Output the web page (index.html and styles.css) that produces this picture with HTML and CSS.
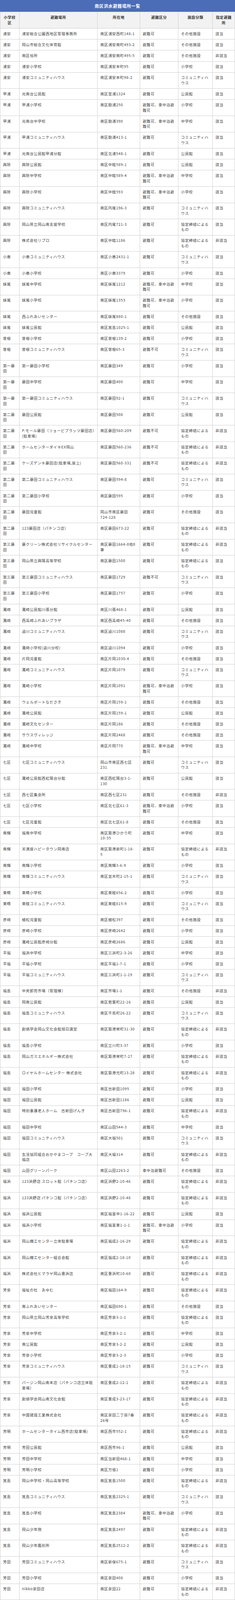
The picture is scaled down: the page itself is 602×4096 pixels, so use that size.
FILE: index.html
```html
<!DOCTYPE html>
<html lang="ja">
<head>
<meta charset="utf-8">
<title>南区洪水避難場所一覧</title>
<link rel="stylesheet" href="styles.css">
</head>
<body>
<div class="page">
<div class="title">南区洪水避難場所一覧</div>
<table class="shelters">
<colgroup>
<col class="c1"><col class="c2"><col class="c3"><col class="c4"><col class="c5"><col class="c6">
</colgroup>
<thead>
<tr><th>小学校区</th><th>避難場所</th><th>所在地</th><th>避難区分</th><th>施設分類</th><th>指定避難所</th></tr>
</thead>
<tbody>
<tr><td>浦安</td><td>浦安総合公園西地区管理事務所</td><td>南区浦安西町148-1</td><td>避難可</td><td>その他施設</td><td>該当</td></tr>
<tr><td>浦安</td><td>岡山市総合文化体育館</td><td>南区浦安南町493-2</td><td>避難可</td><td>その他施設</td><td>該当</td></tr>
<tr><td>浦安</td><td>南区役所</td><td>南区浦安南町495-5</td><td>避難可</td><td>その他施設</td><td>非該当</td></tr>
<tr><td>浦安</td><td>浦安小学校</td><td>南区浦安本町95</td><td>避難可</td><td>小学校</td><td>該当</td></tr>
<tr><td>浦安</td><td>浦安コミュニティハウス</td><td>南区浦安本町98-2</td><td>避難可</td><td>コミュニティハウス</td><td>該当</td></tr>
<tr><td>甲浦</td><td>光南台公民館</td><td>南区宮浦1324</td><td>避難可</td><td>公民館</td><td>該当</td></tr>
<tr><td>甲浦</td><td>甲浦小学校</td><td>南区飽浦250</td><td>避難可、車中泊避難可</td><td>小学校</td><td>該当</td></tr>
<tr><td>甲浦</td><td>光南台中学校</td><td>南区飽浦390</td><td>避難可、車中泊避難可</td><td>中学校</td><td>該当</td></tr>
<tr><td>甲浦</td><td>甲浦コミュニティハウス</td><td>南区飽浦413-1</td><td>避難可</td><td>コミュニティハウス</td><td>該当</td></tr>
<tr><td>甲浦</td><td>光南台公民館甲浦分館</td><td>南区北浦548-1</td><td>避難可</td><td>公民館</td><td>該当</td></tr>
<tr><td>興除</td><td>興除公民館</td><td>南区中畦589-1</td><td>避難可</td><td>公民館</td><td>該当</td></tr>
<tr><td>興除</td><td>興除中学校</td><td>南区中畦589-4</td><td>避難可、車中泊避難可</td><td>中学校</td><td>該当</td></tr>
<tr><td>興除</td><td>興除小学校</td><td>南区中畦593</td><td>避難可、車中泊避難可</td><td>小学校</td><td>該当</td></tr>
<tr><td>興除</td><td>興除コミュニティハウス</td><td>南区内尾196-3</td><td>避難可</td><td>コミュニティハウス</td><td>該当</td></tr>
<tr><td>興除</td><td>岡山県立岡山南支援学校</td><td>南区内尾721-3</td><td>避難可</td><td>協定締結によるもの</td><td>該当</td></tr>
<tr><td>興除</td><td>株式会社リプロ</td><td>南区中畦1186</td><td>避難可</td><td>協定締結によるもの</td><td>非該当</td></tr>
<tr><td>小串</td><td>小串コミュニティハウス</td><td>南区小串2431-1</td><td>避難可</td><td>コミュニティハウス</td><td>該当</td></tr>
<tr><td>小串</td><td>小串小学校</td><td>南区小串3379</td><td>避難可</td><td>小学校</td><td>該当</td></tr>
<tr><td>妹尾</td><td>妹尾中学校</td><td>南区妹尾1212</td><td>避難可、車中泊避難可</td><td>中学校</td><td>該当</td></tr>
<tr><td>妹尾</td><td>妹尾小学校</td><td>南区妹尾1353</td><td>避難可、車中泊避難可</td><td>小学校</td><td>該当</td></tr>
<tr><td>妹尾</td><td>西ふれあいセンター</td><td>南区妹尾880-1</td><td>避難可</td><td>その他施設</td><td>該当</td></tr>
<tr><td>妹尾</td><td>妹尾公民館</td><td>南区箕島1025-1</td><td>避難可</td><td>公民館</td><td>該当</td></tr>
<tr><td>曽根</td><td>曽根小学校</td><td>南区曽根139-2</td><td>避難可</td><td>小学校</td><td>該当</td></tr>
<tr><td>曽根</td><td>曽根コミュニティハウス</td><td>南区曽根65-3</td><td>避難不可</td><td>コミュニティハウス</td><td>該当</td></tr>
<tr><td>第一藤田</td><td>第一藤田小学校</td><td>南区藤田349</td><td>避難可</td><td>小学校</td><td>該当</td></tr>
<tr><td>第一藤田</td><td>藤田中学校</td><td>南区藤田400</td><td>避難可</td><td>中学校</td><td>該当</td></tr>
<tr><td>第一藤田</td><td>第一藤田コミュニティハウス</td><td>南区藤田92-1</td><td>避難可</td><td>コミュニティハウス</td><td>該当</td></tr>
<tr><td>第二藤田</td><td>藤田公民館</td><td>南区藤田508</td><td>避難可</td><td>公民館</td><td>該当</td></tr>
<tr><td>第二藤田</td><td>P.モール藤田（リョービプラッツ藤田店）(駐車場)</td><td>南区藤田560-209</td><td>避難不可</td><td>協定締結によるもの</td><td>非該当</td></tr>
<tr><td>第二藤田</td><td>ホームセンターダイキEX岡山</td><td>南区藤田560-236</td><td>避難不可</td><td>協定締結によるもの</td><td>非該当</td></tr>
<tr><td>第二藤田</td><td>ケーズデンキ藤田店(駐車場,屋上)</td><td>南区藤田560-331</td><td>避難不可</td><td>協定締結によるもの</td><td>非該当</td></tr>
<tr><td>第二藤田</td><td>第二藤田コミュニティハウス</td><td>南区藤田594-8</td><td>避難可</td><td>コミュニティハウス</td><td>該当</td></tr>
<tr><td>第二藤田</td><td>第二藤田小学校</td><td>南区藤田595</td><td>避難可</td><td>小学校</td><td>該当</td></tr>
<tr><td>第二藤田</td><td>藤田児童館</td><td>岡山市南区藤田<br>724-128</td><td>避難可</td><td>その他施設</td><td>該当</td></tr>
<tr><td>第二藤田</td><td>123藤田店（パチンコ店）</td><td>南区藤田673-22</td><td>避難可</td><td>協定締結によるもの</td><td>非該当</td></tr>
<tr><td>第三藤田</td><td>藤クリーン株式会社リサイクルセンター</td><td>南区藤田1664-8他8<br>筆</td><td>避難可</td><td>協定締結によるもの</td><td>非該当</td></tr>
<tr><td>第三藤田</td><td>岡山県立興陽高等学校</td><td>南区藤田1500</td><td>避難可</td><td>協定締結によるもの</td><td>該当</td></tr>
<tr><td>第三藤田</td><td>第三藤田コミュニティハウス</td><td>南区藤田1729</td><td>避難不可</td><td>コミュニティハウス</td><td>該当</td></tr>
<tr><td>第三藤田</td><td>第三藤田小学校</td><td>南区藤田1757</td><td>避難可</td><td>小学校</td><td>該当</td></tr>
<tr><td>灘崎</td><td>灘崎公民館川張分館</td><td>南区川張468-1</td><td>避難可</td><td>公民館</td><td>該当</td></tr>
<tr><td>灘崎</td><td>西高崎ふれあいプラザ</td><td>南区西高崎45-40</td><td>避難可</td><td>その他施設</td><td>該当</td></tr>
<tr><td>灘崎</td><td>迫川コミュニティハウス</td><td>南区迫川1088</td><td>避難可</td><td>コミュニティハウス</td><td>該当</td></tr>
<tr><td>灘崎</td><td>灘崎小学校(迫川分校)</td><td>南区迫川1094</td><td>避難可</td><td>小学校</td><td>該当</td></tr>
<tr><td>灘崎</td><td>片岡児童館</td><td>南区片岡1030-4</td><td>避難可</td><td>その他施設</td><td>該当</td></tr>
<tr><td>灘崎</td><td>灘崎コミュニティハウス</td><td>南区片岡1079</td><td>避難可</td><td>コミュニティハウス</td><td>該当</td></tr>
<tr><td>灘崎</td><td>灘崎小学校</td><td>南区片岡1091</td><td>避難可、車中泊避難可</td><td>小学校</td><td>該当</td></tr>
<tr><td>灘崎</td><td>ウェルポートなださき</td><td>南区片岡159-1</td><td>避難可</td><td>その他施設</td><td>該当</td></tr>
<tr><td>灘崎</td><td>灘崎公民館</td><td>南区片岡159-1</td><td>避難可</td><td>公民館</td><td>該当</td></tr>
<tr><td>灘崎</td><td>灘崎文化センター</td><td>南区片岡186</td><td>避難可</td><td>その他施設</td><td>該当</td></tr>
<tr><td>灘崎</td><td>サウスヴィレッジ</td><td>南区片岡2468</td><td>避難可</td><td>その他施設</td><td>該当</td></tr>
<tr><td>灘崎</td><td>灘崎中学校</td><td>南区片岡770</td><td>避難可、車中泊避難可</td><td>中学校</td><td>該当</td></tr>
<tr><td>七区</td><td>七区コミュニティハウス</td><td>岡山市南区西七区<br>231</td><td>避難可</td><td>コミュニティハウス</td><td>該当</td></tr>
<tr><td>七区</td><td>灘崎公民館西紅陽台分館</td><td>南区西紅陽台3-1-<br>130</td><td>避難可</td><td>公民館</td><td>該当</td></tr>
<tr><td>七区</td><td>西七区集会所</td><td>南区西七区231</td><td>避難可</td><td>その他施設</td><td>非該当</td></tr>
<tr><td>七区</td><td>七区小学校</td><td>南区北七区61-3</td><td>避難可、車中泊避難可</td><td>小学校</td><td>該当</td></tr>
<tr><td>七区</td><td>七区児童館</td><td>南区北七区61-8</td><td>避難可</td><td>その他施設</td><td>該当</td></tr>
<tr><td>南輝</td><td>福南中学校</td><td>南区築港ひかり町<br>10-35</td><td>避難可</td><td>中学校</td><td>該当</td></tr>
<tr><td>南輝</td><td>天満屋ハピータウン岡南店</td><td>南区築港新町1-18-<br>5</td><td>避難可</td><td>協定締結によるもの</td><td>非該当</td></tr>
<tr><td>南輝</td><td>南輝小学校</td><td>南区南輝3-6-9</td><td>避難可</td><td>小学校</td><td>該当</td></tr>
<tr><td>南輝</td><td>南輝コミュニティハウス</td><td>南区並木町2-15-1</td><td>避難可</td><td>コミュニティハウス</td><td>該当</td></tr>
<tr><td>東疇</td><td>東疇小学校</td><td>南区東畦656-2</td><td>避難可</td><td>小学校</td><td>該当</td></tr>
<tr><td>東疇</td><td>東畦コミュニティハウス</td><td>南区東畦815-9</td><td>避難可</td><td>コミュニティハウス</td><td>該当</td></tr>
<tr><td>彦崎</td><td>植松児童館</td><td>南区植松397</td><td>避難可</td><td>その他施設</td><td>該当</td></tr>
<tr><td>彦崎</td><td>彦崎小学校</td><td>南区彦崎2642</td><td>避難可</td><td>小学校</td><td>該当</td></tr>
<tr><td>彦崎</td><td>灘崎公民館彦崎分館</td><td>南区彦崎2686</td><td>避難可</td><td>公民館</td><td>該当</td></tr>
<tr><td>平福</td><td>福浜中学校</td><td>南区三浜町2-3-26</td><td>避難可</td><td>中学校</td><td>該当</td></tr>
<tr><td>平福</td><td>平福小学校</td><td>南区平福1-7-1</td><td>避難可</td><td>小学校</td><td>該当</td></tr>
<tr><td>平福</td><td>平福コミュニティハウス</td><td>南区三浜町1-1-19</td><td>避難可</td><td>コミュニティハウス</td><td>該当</td></tr>
<tr><td>福島</td><td>中央卸売市場（管理棟）</td><td>南区市場1-1</td><td>避難可</td><td>その他施設</td><td>非該当</td></tr>
<tr><td>福島</td><td>岡南公民館</td><td>南区若葉町22-16</td><td>避難可</td><td>公民館</td><td>該当</td></tr>
<tr><td>福島</td><td>福島コミュニティハウス</td><td>南区千鳥町26-22</td><td>避難可</td><td>コミュニティハウス</td><td>該当</td></tr>
<tr><td>福島</td><td>創価学会岡山文化会館旭日講堂</td><td>南区築港栄町31-30</td><td>避難可</td><td>協定締結によるもの</td><td>非該当</td></tr>
<tr><td>福島</td><td>福島小学校</td><td>南区立川町3-37</td><td>避難可</td><td>小学校</td><td>該当</td></tr>
<tr><td>福島</td><td>岡山ガスエネルギー株式会社</td><td>南区築港栄町7-27</td><td>避難可</td><td>協定締結によるもの</td><td>非該当</td></tr>
<tr><td>福島</td><td>ロイヤルホームセンター 株式会社</td><td>南区築港元町13-28</td><td>避難可</td><td>協定締結によるもの</td><td>非該当</td></tr>
<tr><td>福田</td><td>福田小学校</td><td>南区古新田1095</td><td>避難可</td><td>小学校</td><td>該当</td></tr>
<tr><td>福田</td><td>福田公民館</td><td>南区古新田1186</td><td>避難可</td><td>公民館</td><td>該当</td></tr>
<tr><td>福田</td><td>特別養護老人ホーム　古新田げんき</td><td>南区古新田796-1</td><td>避難可</td><td>協定締結によるもの</td><td>非該当</td></tr>
<tr><td>福田</td><td>福田中学校</td><td>南区山田544-3</td><td>避難可</td><td>中学校</td><td>該当</td></tr>
<tr><td>福田</td><td>福田コミュニティハウス</td><td>南区大福501</td><td>避難可</td><td>コミュニティハウス</td><td>該当</td></tr>
<tr><td>福田</td><td>生活協同組合おかやまコープ　コープ大福店</td><td>南区大福314</td><td>避難可</td><td>協定締結によるもの</td><td>非該当</td></tr>
<tr><td>福田</td><td>山田グリーンパーク</td><td>南区山田2263-2</td><td>車中泊避難可</td><td>その他施設</td><td>該当</td></tr>
<tr><td>福浜</td><td>123浜野店 スロット館（パチンコ店）</td><td>南区浜野2-10-46</td><td>避難可</td><td>協定締結によるもの</td><td>非該当</td></tr>
<tr><td>福浜</td><td>123浜野店 パチンコ館（パチンコ店）</td><td>南区浜野2-10-48</td><td>避難可</td><td>協定締結によるもの</td><td>非該当</td></tr>
<tr><td>福浜</td><td>福浜公民館</td><td>南区福富中1-16-22</td><td>避難可</td><td>公民館</td><td>該当</td></tr>
<tr><td>福浜</td><td>福浜小学校</td><td>南区福富東1-1-1</td><td>避難可、車中泊避難可</td><td>小学校</td><td>該当</td></tr>
<tr><td>福浜</td><td>岡山機工センター立体駐車場</td><td>南区福成2-16-29</td><td>避難可</td><td>協定締結によるもの</td><td>非該当</td></tr>
<tr><td>福浜</td><td>岡山機工センター組合会館</td><td>南区福成2-18-10</td><td>避難可</td><td>協定締結によるもの</td><td>非該当</td></tr>
<tr><td>福浜</td><td>株式会社ヒマラヤ岡山豊浜店</td><td>南区豊浜町10-60</td><td>避難可</td><td>協定締結によるもの</td><td>非該当</td></tr>
<tr><td>芳泉</td><td>福祉の杜　あゆむ</td><td>南区福田164-9</td><td>避難可</td><td>協定締結によるもの</td><td>非該当</td></tr>
<tr><td>芳泉</td><td>南ふれあいセンター</td><td>南区福田690-1</td><td>避難可</td><td>その他施設</td><td>該当</td></tr>
<tr><td>芳泉</td><td>岡山県立岡山芳泉高等学校</td><td>南区芳泉3-1-1</td><td>避難可</td><td>協定締結によるもの</td><td>該当</td></tr>
<tr><td>芳泉</td><td>芳泉中学校</td><td>南区芳泉3-2-1</td><td>避難可</td><td>中学校</td><td>該当</td></tr>
<tr><td>芳泉</td><td>南公民館</td><td>南区芳泉3-2-2</td><td>避難可</td><td>公民館</td><td>該当</td></tr>
<tr><td>芳泉</td><td>芳泉小学校</td><td>南区芳泉3-2-3</td><td>避難可</td><td>小学校</td><td>該当</td></tr>
<tr><td>芳泉</td><td>芳泉コミュニティハウス</td><td>南区豊成1-18-15</td><td>避難可</td><td>コミュニティハウス</td><td>該当</td></tr>
<tr><td>芳泉</td><td>バージン岡山南本店（パチンコ店立体駐車場）</td><td>南区豊成2-12-1</td><td>避難可</td><td>協定締結によるもの</td><td>非該当</td></tr>
<tr><td>芳泉</td><td>創価学会岡山南文化会館</td><td>南区豊成3-23-17</td><td>避難可</td><td>協定締結によるもの</td><td>非該当</td></tr>
<tr><td>芳泉</td><td>中国建設工業株式会社</td><td>南区泉田二丁目7番<br>26号</td><td>避難可</td><td>協定締結によるもの</td><td>非該当</td></tr>
<tr><td>芳明</td><td>ホームセンタータイム西市店(駐車場)</td><td>南区西市552-1</td><td>避難可</td><td>協定締結によるもの</td><td>非該当</td></tr>
<tr><td>芳明</td><td>芳田公民館</td><td>南区西市96-1</td><td>避難可</td><td>公民館</td><td>該当</td></tr>
<tr><td>芳明</td><td>芳田中学校</td><td>南区当新田468-1</td><td>避難可</td><td>中学校</td><td>該当</td></tr>
<tr><td>芳明</td><td>芳明小学校</td><td>南区万倍1</td><td>避難可</td><td>小学校</td><td>該当</td></tr>
<tr><td>箕島</td><td>岡山中学校・岡山高等学校</td><td>南区箕島1500</td><td>避難可</td><td>協定締結によるもの</td><td>非該当</td></tr>
<tr><td>箕島</td><td>箕島コミュニティハウス</td><td>南区箕島2325-1</td><td>避難可</td><td>コミュニティハウス</td><td>該当</td></tr>
<tr><td>箕島</td><td>箕島小学校</td><td>南区箕島2384</td><td>避難可、車中泊避難可</td><td>小学校</td><td>該当</td></tr>
<tr><td>箕島</td><td>岡山少年院</td><td>南区箕島2497</td><td>避難可</td><td>協定締結によるもの</td><td>非該当</td></tr>
<tr><td>箕島</td><td>岡山少年鑑別所</td><td>南区箕島2512-2</td><td>避難可</td><td>協定締結によるもの</td><td>非該当</td></tr>
<tr><td>芳田</td><td>芳田コミュニティハウス</td><td>南区新保675-1</td><td>避難可</td><td>コミュニティハウス</td><td>該当</td></tr>
<tr><td>芳田</td><td>芳田小学校</td><td>南区泉田408</td><td>避難可</td><td>小学校</td><td>該当</td></tr>
<tr><td>芳田</td><td>nikko泉田店</td><td>南区泉田22</td><td>避難可</td><td>協定締結によるもの</td><td>非該当</td></tr>
</tbody>
</table>
</div>
</body>
</html>
```
FILE: styles.css
```css
html, body {
  margin: 0;
  padding: 0;
  background: #ffffff;
}

body {
  font-family: "Noto Sans CJK JP", "Noto Sans", sans-serif;
  color: #444444;
}

.page {
  width: 602px;
}

.title {
  height: 29.7px;
  display: flex;
  align-items: center;
  justify-content: center;
  background: #4b6cb7;
  color: #ffffff;
  font-size: 11px;
  letter-spacing: 0.7px;
  font-weight: 700;
}

.shelters {
  width: 100%;
  border-collapse: collapse;
  table-layout: fixed;
  font-size: 9.45px;
  letter-spacing: 0.675px;
  line-height: 13.5px;
}

.c1 { width: 8.07%; }
.c2 { width: 33.4%; }
.c3 { width: 18.05%; }
.c4 { width: 16.37%; }
.c5 { width: 14.69%; }
.c6 { width: 9.42%; }

.shelters th,
.shelters td {
  border: 1px solid #cfcfcf;
  padding: 6.8px 6.75px;
  vertical-align: top;
  text-align: left;
}

.shelters th {
  background: #f2f2f2;
  color: #333333;
  font-weight: 700;
  text-align: center;
  line-height: 14px;
}
```
